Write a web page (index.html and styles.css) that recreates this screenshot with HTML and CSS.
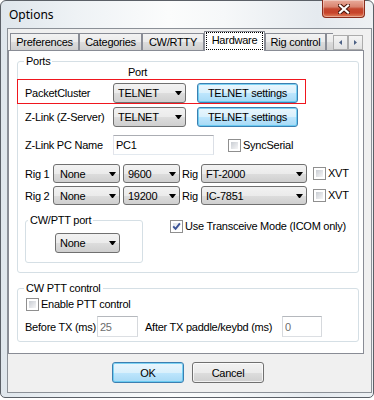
FILE: index.html
```html
<!DOCTYPE html>
<html lang="en">
<head>
    <meta charset="UTF-8">
    <meta name="viewport" content="width=device-width, initial-scale=1.0">
    <title>Options</title>
    <link rel="stylesheet" href="styles.css">
</head>
<body>

<div class="window">
    <div class="titlebar">
        <span class="title">Options</span>
        <span class="close-btn">
            <svg width="12" height="10" viewBox="0 0 12 10">
                <path d="M2 1.5 L10 8.5 M10 1.5 L2 8.5" stroke="#4a160b" stroke-width="4.2" stroke-linecap="square"/>
                <path d="M2 1.5 L10 8.5 M10 1.5 L2 8.5" stroke="#fff" stroke-width="2.2" stroke-linecap="square"/>
            </svg>
        </span>
    </div>

    <div class="client">
        <div class="tabs">
            <div class="tab-strip">
                <span class="tab t-pref">Preferences</span>
                <span class="tab t-cat">Categories</span>
                <span class="tab t-cw">CW/RTTY</span>
                <span class="tab t-hw active"><span class="focus">Hardware</span></span>
                <span class="tab t-rig">Rig control</span>
                <span class="tab t-misc"></span>
            </div>
            <div class="spin">
                <span class="spin-btn">
                    <svg width="3" height="5" viewBox="0 0 3 5"><path d="M3 0 L0 2.5 L3 5 Z" fill="#4d6185"/></svg>
                </span>
                <span class="spin-btn">
                    <svg width="3" height="5" viewBox="0 0 3 5"><path d="M0 0 L3 2.5 L0 5 Z" fill="#4d6185"/></svg>
                </span>
            </div>
        </div>

        <div class="panel">
            <!-- Ports -->
            <div class="group ports">
                <span class="group-title">Ports</span>
                <div class="port-head">Port</div>

                <div class="row row-hl">
                    <span class="lbl-port">PacketCluster</span>
                    <div class="combo c-telnet"><span>TELNET</span><span class="arrow"></span></div>
                    <button class="btn btn-blue btn-telnet">TELNET settings</button>
                </div>

                <div class="row row-z">
                    <span class="lbl-port">Z-Link (Z-Server)</span>
                    <div class="combo c-telnet"><span>TELNET</span><span class="arrow"></span></div>
                    <button class="btn btn-blue btn-telnet">TELNET settings</button>
                </div>

                <div class="row row-name">
                    <span class="lbl-port">Z-Link PC Name</span>
                    <input class="field f-name" type="text" value="PC1">
                    <label class="check chk-sync"><span class="chk"></span><span class="chk-text">SyncSerial</span></label>
                </div>

                <div class="row row-rig row-rig1">
                    <span class="lbl-rig">Rig 1</span>
                    <div class="combo c-rigport"><span>None</span><span class="arrow"></span></div>
                    <div class="combo c-baud"><span>9600</span><span class="arrow"></span></div>
                    <span class="lbl-rigname">Rig</span>
                    <div class="combo c-rig"><span>FT-2000</span><span class="arrow"></span></div>
                    <label class="check chk-xvt"><span class="chk"></span><span class="chk-text">XVT</span></label>
                </div>

                <div class="row row-rig row-rig2">
                    <span class="lbl-rig">Rig 2</span>
                    <div class="combo c-rigport"><span>None</span><span class="arrow"></span></div>
                    <div class="combo c-baud"><span>19200</span><span class="arrow"></span></div>
                    <span class="lbl-rigname">Rig</span>
                    <div class="combo c-rig"><span>IC-7851</span><span class="arrow"></span></div>
                    <label class="check chk-xvt"><span class="chk"></span><span class="chk-text">XVT</span></label>
                </div>

                <div class="row row-bottom">
                    <div class="group cwport">
                        <span class="group-title">CW/PTT port</span>
                        <div class="combo c-cwport"><span>None</span><span class="arrow"></span></div>
                    </div>
                    <label class="check chk-icom">
                        <span class="chk checked">
                            <svg width="9" height="9" viewBox="0 0 9 9"><path d="M1.2 4.3 L3.6 6.9 L7.9 1.4" fill="none" stroke="#3b5296" stroke-width="1.9"/></svg>
                        </span>
                        <span class="chk-text">Use Transceive Mode (ICOM only)</span>
                    </label>
                </div>
            </div>

            <!-- CW PTT control -->
            <div class="group ptt">
                <span class="group-title">CW PTT control</span>
                <div class="ptt-row1">
                    <label class="check"><span class="chk"></span><span class="chk-text">Enable PTT control</span></label>
                </div>
                <div class="ptt-row2">
                    <span class="lbl-before">Before TX (ms)</span>
                    <input class="field f-ms" type="text" value="25" disabled>
                    <span class="lbl-after">After TX paddle/keybd (ms)</span>
                    <input class="field f-ms f-after" type="text" value="0" disabled>
                </div>
            </div>
        </div>

        <div class="dlg-buttons">
            <button class="btn btn-blue btn-dlg">OK</button>
            <button class="btn btn-dlg">Cancel</button>
        </div>
    </div>
</div>

</body>
</html>
```

FILE: styles.css
```css
body {
    margin: 0;
    background: #fff;
    font-family: "Liberation Sans", Arial, sans-serif;
    font-size: 11px;
    letter-spacing: -0.25px;
    color: #000;
}

/* window frame */
.window {
    width: 374px;
    height: 398px;
    box-sizing: border-box;
    border: 1px solid #5b6067;
    border-radius: 6px 6px 5px 5px;
    padding: 0 1px 4px 6px;
    background: linear-gradient(to right, #dfe6ec 0%, #eef2f5 20%, #fbfcfc 45%, #f6f8f9 60%, #e5eaef 85%, #eef1f4 100%);
}

.titlebar {
    display: flex;
    justify-content: space-between;
    height: 27px;
    margin-left: -6px;
}

.title {
    margin: 7px 0 0 8px;
    font-family: "Noto Sans", sans-serif;
    font-size: 12px;
    line-height: 14px;
    letter-spacing: 0;
}

.close-btn {
    display: flex;
    align-items: center;
    justify-content: center;
    width: 43px;
    height: 18px;
    box-sizing: border-box;
    margin: -1px 7px 0 0;
    border: 1px solid #8a2c1c;
    border-top: none;
    border-radius: 0 0 4px 4px;
    background: linear-gradient(#e9ab9b 0%, #d98470 40%, #c4472f 52%, #c7432a 75%, #e0815c 100%);
    box-shadow: inset 0 0 0 1px rgba(255, 255, 255, 0.35);
}

.client {
    width: 365px;
    height: 365px;
    box-sizing: border-box;
    border: 1px solid #8b9097;
    background: #f0f0f0;
}

/* tabs */
.tabs {
    display: flex;
    height: 22px;
    position: relative;
    z-index: 2;
}

.tab-strip {
    display: flex;
    align-items: flex-end;
    flex: none;
    width: 325px;
    padding-left: 2px;
    box-sizing: border-box;
    overflow: hidden;
}

.tab {
    flex: none;
    box-sizing: border-box;
    height: 17px;
    margin-bottom: 1px;
    border: 1px solid #898c95;
    border-bottom: none;
    background: linear-gradient(#f2f2f2 0%, #ebebeb 50%, #dddddd 51%, #cfcfcf 100%);
    text-align: center;
    line-height: 16px;
    white-space: nowrap;
}

.tab.active {
    height: 20px;
    margin-bottom: 0;
    background: #fff;
}

.focus {
    display: block;
    height: 18px;
    box-sizing: border-box;
    margin: 0 1px;
    border: 1px dotted #000;
    line-height: 15px;
}

.t-pref { width: 69px; }
.t-cat { width: 63px; }
.t-cw { width: 62px; }
.t-hw { width: 61px; }
.t-rig { width: 61px; }
.t-misc { width: 60px; }

.spin {
    display: flex;
    align-self: flex-end;
    margin-bottom: 1px;
}

.spin-btn {
    display: flex;
    align-items: center;
    justify-content: center;
    width: 15px;
    height: 15px;
    box-sizing: border-box;
    border: 1px solid #acacac;
    background: linear-gradient(#f4f4f4, #e2e2e2);
}

/* panel */
.panel {
    position: relative;
    z-index: 1;
    margin-top: -1px;
    width: 356px;
    height: 304px;
    box-sizing: border-box;
    border: 1px solid #898c95;
    background: #fff;
    padding: 10px 0 0 8px;
}

.group {
    position: relative;
    box-sizing: border-box;
    border: 1px solid #d5dfe5;
    border-radius: 3px;
}

.group-title {
    position: absolute;
    top: -8px;
    left: 6px;
    padding: 0 2px;
    background: #fff;
    line-height: 14px;
    white-space: nowrap;
}

.ports {
    width: 342px;
    padding: 3px 0 9px 0;
}

.port-head {
    height: 14px;
    line-height: 14px;
    padding-left: 110px;
}

.row {
    display: flex;
    align-items: center;
    height: 20px;
    padding-left: 7px;
}

.row > * {
    flex: none;
}

.row-hl {
    width: 289px;
    height: 25px;
    box-sizing: border-box;
    margin-left: -1px;
    border: 1px solid red;
    border-color: #f0161e;
    padding-top: 3px;
}

.row-z { margin-top: 3px; }
.row-name { margin-top: 8px; }
.row-rig { height: 19px; }
.row-rig1 { margin-top: 9px; }
.row-rig2 { margin-top: 3px; }

.row-bottom {
    height: auto;
    margin-top: 15px;
    align-items: flex-start;
}

.lbl-port { width: 88px; }
.lbl-rig { width: 28px; }
.lbl-rigname { width: 19px; margin-left: 2px; }

/* combo boxes */
.combo {
    display: flex;
    align-items: center;
    justify-content: space-between;
    box-sizing: border-box;
    height: 20px;
    padding: 0 3px 0 4px;
    border: 1px solid #707070;
    border-radius: 3px;
    background: linear-gradient(#f2f2f2 0%, #ebebeb 50%, #dddddd 51%, #cfcfcf 100%);
    white-space: nowrap;
}

.row-rig .combo { height: 19px; }

.arrow {
    width: 1px;
    height: 0;
    border-top: 4px solid #000;
    border-left: 3px solid transparent;
    border-right: 3px solid transparent;
}

.c-telnet { width: 73px; }
.c-rigport { width: 67px; padding-left: 6px; }
.c-baud { width: 57px; margin-left: 3px; }
.c-rig { width: 106px; }
.c-cwport { width: 65px; }

/* buttons */
.btn {
    font: inherit;
    letter-spacing: inherit;
    color: #000;
    box-sizing: border-box;
    height: 20px;
    padding: 0;
    border: 1px solid #707070;
    border-radius: 3px;
    background: linear-gradient(#f2f2f2 0%, #ebebeb 50%, #dddddd 51%, #cfcfcf 100%);
    box-shadow: inset 0 0 0 1px rgba(255, 255, 255, 0.7);
}

.btn-blue {
    border-color: #3c7fb1;
    background: linear-gradient(#eaf6fd 0%, #d9f0fc 50%, #bee6fd 51%, #a7d9f5 100%);
    box-shadow: inset 0 0 0 1px rgba(80, 196, 240, 0.7);
}

.btn-telnet {
    width: 101px;
    margin-left: 11px;
}

/* text fields */
.field {
    font: inherit;
    letter-spacing: inherit;
    box-sizing: border-box;
    height: 20px;
    margin: 0;
    padding: 0 2px;
    border: 1px solid;
    border-color: #abadb3 #dbdfe6 #e3e9ef #e2e3ea;
    background: #fff;
    color: #000;
    outline: none;
}

.f-name {
    width: 101px;
}

.f-ms {
    width: 41px;
    height: 21px;
    color: #6d6d6d;
    border-color: #b5b8bd #d6d9dd #dcdfe3 #d6d9dd;
}

.f-after { width: 40px; }

/* check boxes */
.check {
    display: flex;
    align-items: center;
}

.chk {
    position: relative;
    flex: none;
    width: 13px;
    height: 13px;
    box-sizing: border-box;
    border: 1px solid #8f8f8f;
    padding: 2px;
    background: linear-gradient(135deg, #c9cdd3, #f6f6f7) content-box, #fff;
}

.chk.checked {
    background: linear-gradient(135deg, #dfe3e8, #fbfbfb) content-box, #fff;
}

.chk svg {
    position: absolute;
    left: 1px;
    top: 1px;
}

.chk-text {
    margin-left: 2px;
    line-height: 13px;
    white-space: nowrap;
}

.chk-sync { margin-left: 14px; }
.chk-xvt { margin-left: 6px; }
.chk-icom { margin-left: 27px; }

.cwport {
    width: 118px;
    height: 43px;
    padding: 12px 0 0 29px;
}

.cwport .group-title { left: 2px; }

/* CW PTT control */
.ptt {
    width: 342px;
    margin-top: 15px;
    padding: 9px 0 4px 7px;
}

.ptt-row1 {
    height: 13px;
    padding-left: 1px;
}

.ptt-row2 {
    display: flex;
    align-items: center;
    height: 21px;
    margin-top: 5px;
}

.lbl-before { width: 72px; flex: none; white-space: nowrap; }
.lbl-after { width: 137px; margin-left: 7px; flex: none; white-space: nowrap; }

/* dialog buttons */
.dlg-buttons {
    display: flex;
    gap: 8px;
    padding: 8px 0 0 104px;
}

.btn-dlg {
    width: 72px;
    height: 21px;
}
```
